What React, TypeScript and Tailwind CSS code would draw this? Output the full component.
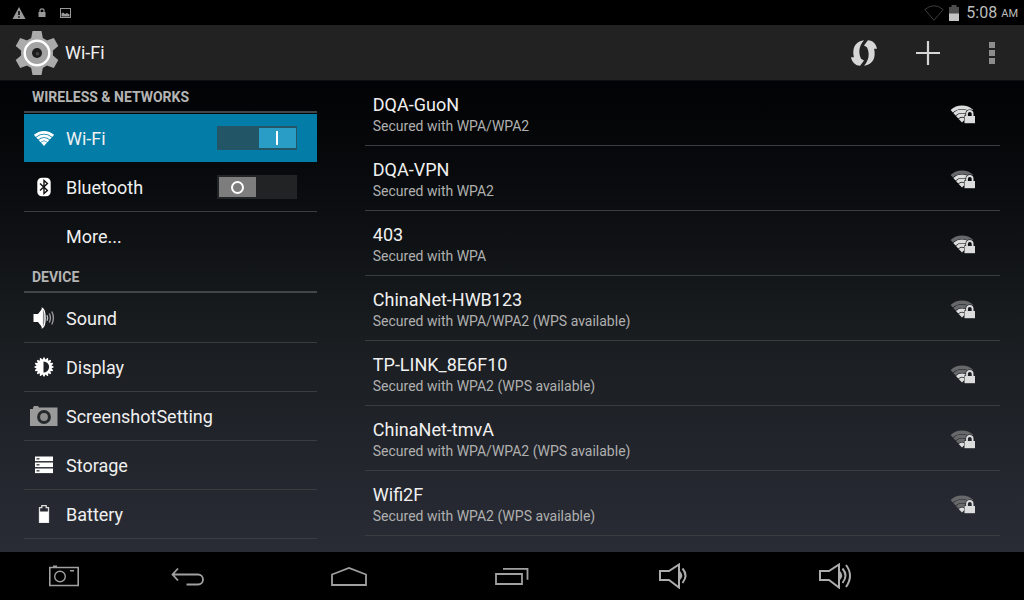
import { useId, useState } from "react";
import type { ReactNode } from "react";

// wedge between two radii, opening upwards from (cx, cy)
function fan(cx: number, cy: number, r1: number, r2: number, deg = 42) {
  const a = (deg * Math.PI) / 180;
  const s = Math.sin(a);
  const c = Math.cos(a);
  return `M${cx - r1 * s} ${cy - r1 * c}L${cx - r2 * s} ${cy - r2 * c}A${r2} ${r2} 0 0 1 ${cx + r2 * s} ${cy - r2 * c}L${cx + r1 * s} ${cy - r1 * c}A${r1} ${r1} 0 0 0 ${cx - r1 * s} ${cy - r1 * c}Z`;
}

const networks = [
  { name: "DQA-GuoN", security: "Secured with WPA/WPA2", level: 4 },
  { name: "DQA-VPN", security: "Secured with WPA2", level: 3 },
  { name: "403", security: "Secured with WPA", level: 3 },
  { name: "ChinaNet-HWB123", security: "Secured with WPA/WPA2 (WPS available)", level: 2 },
  { name: "TP-LINK_8E6F10", security: "Secured with WPA2 (WPS available)", level: 2 },
  { name: "ChinaNet-tmvA", security: "Secured with WPA/WPA2 (WPS available)", level: 1 },
  { name: "Wifi2F", security: "Secured with WPA2 (WPS available)", level: 1 },
];

const bands = [
  [0, 5],
  [5.6, 9],
  [9.7, 13],
  [13.7, 17],
];

function SignalIcon({ level }: { level: number }) {
  const id = useId();
  return (
    <svg width="26" height="20" viewBox="0 0 26 20" aria-label={`Signal ${level} of 4`}>
      <mask id={id}>
        <rect width="26" height="20" fill="#fff" />
        <path d="M14 20v-8.500h1.500V9.500q0-4 4.500-4t4.500 4v2.500h2v8z" fill="#000" />
      </mask>
      <g mask={`url(#${id})`}>
        {bands.map(([r1, r2], i) => (
          <path key={r2} d={fan(12, 18.6, r1, r2)} fill={i < level ? "#dcdcdc" : "#66686a"} />
        ))}
      </g>
      <rect x="14.5" y="12" width="10.500" height="7.200" fill="#dcdcdc" />
      <path d="M17 12.500V9.800q0-2.800 2.800-2.800t2.800 2.800V12.500" fill="none" stroke="#dcdcdc" strokeWidth="1.800" />
    </svg>
  );
}

const WifiIcon = () => (
  <svg width="20" height="18" viewBox="0 0 20 18" fill="#fff">
    <path d={fan(10, 17, 0, 4.6)} />
    <path d={fan(10, 17, 5.2, 8)} />
    <path d={fan(10, 17, 8.7, 11.5)} />
    <path d={fan(10, 17, 12.2, 15)} />
  </svg>
);

const BluetoothIcon = () => (
  <svg width="14" height="20" viewBox="0 0 14 20">
    <rect x="0.3" y="0.7" width="13.4" height="18.6" rx="4.5" fill="#fff" />
    <path d="M3 6.5l7.400 7L7 16.500v-13l3.400 3-7.400 7" fill="none" stroke="#111" strokeWidth="1.4" />
  </svg>
);

const SoundIcon = () => (
  <svg width="22" height="22" viewBox="0 0 22 22">
    <path d="M0.5 7h4.500L9.500 1.200v19.600L5 15H0.500z" fill="#fff" />
    <path d="M9.300 1.200c3.800 2 3.800 17.600 0 19.600z" fill="#888" stroke="#fff" strokeWidth="1.200" />
    <path d="M14 8.300q1.300 2.700 0 5.400" fill="none" stroke="#bbb" strokeWidth="1.400" />
    <path d="M16.300 6.500q2.200 4.500 0 9M18.800 4.500q3.200 6.500 0 13" fill="none" stroke="#999" strokeWidth="1.400" />
  </svg>
);

const DisplayIcon = () => (
  <svg width="20" height="20" viewBox="-10 -10 20 20">
    {[...Array(16)].map((_, i) => (
      <path key={i} d="M-1.5 -7L-0.6 -9.6H0.6L1.5 -7z" fill="#fff" transform={`rotate(${i * 22.5})`} />
    ))}
    <circle r="7.8" fill="#fff" />
    <path d="M-0.5 -5.6A5.6 5.6 0 0 1 -0.5 5.6Z" fill="#1d2024" />
  </svg>
);

const CameraIcon = () => (
  <svg width="28" height="20" viewBox="0 0 28 20">
    <path d="M0 3h3V1.5L4 0h4l1 1.500h18.500V20H0z" fill="#9a9a9a" />
    <circle cx="14" cy="11" r="5.4" fill="#8e8e8e" stroke="#26292c" strokeWidth="3" />
  </svg>
);

const StorageIcon = () => (
  <svg width="18" height="18" viewBox="0 0 18 18">
    {[0.5, 6.5, 12.5].map((y) => (
      <g key={y}>
        <rect y={y} width="18" height="4.6" fill="#fff" />
        <rect x="1.5" y={y + 1.6} width="3" height="1.4" fill="#444" />
      </g>
    ))}
  </svg>
);

const BatteryIcon = () => (
  <svg width="12" height="18" viewBox="0 0 12 18">
    <path d="M3.8 0.7h4.400v2h2.300v14.600h-9V2.700h2.300z" fill="none" stroke="#ddd" strokeWidth="1.3" />
    <rect x="1.5" y="6.5" width="9" height="11" fill="#fff" />
  </svg>
);

function Switch({ label, on, onChange }: { label: string; on: boolean; onChange: (v: boolean) => void }) {
  return (
    <label className={`relative mr-5 flex h-6 w-20 cursor-pointer p-0.5 ${on ? "justify-end bg-[#225566] pr-px" : "bg-[#222325]"}`}>
      <input
        type="checkbox"
        role="switch"
        aria-label={label}
        checked={on}
        onChange={(e) => onChange(e.target.checked)}
        className="absolute inset-0 cursor-pointer appearance-none"
      />
      <span className={`pointer-events-none flex w-[37px] items-center justify-center ${on ? "bg-[#2a9dc7]" : "bg-[#7d7d7d]"}`}>
        {on ? (
          <span className="h-3.5 w-0.5 bg-white" />
        ) : (
          <span className="size-[13px] rounded-full border-2 border-white" />
        )}
      </span>
    </label>
  );
}

function SectionTitle({ children }: { children: ReactNode }) {
  return (
    <h2 className="h-8 border-b-2 border-[#434648] pl-2 text-sm leading-8 font-bold text-[#b4b4b4]">
      {children}
    </h2>
  );
}

type RowProps = {
  label: string;
  icon?: ReactNode;
  selected?: boolean;
  last?: boolean;
  onSelect: () => void;
  children?: ReactNode;
};

function Row({ label, icon, selected, last, onSelect, children }: RowProps) {
  return (
    <li
      className={`flex h-[49px] items-center border-b bg-clip-padding ${last || selected ? "border-transparent" : "border-[#3a3d40]"} ${selected ? "bg-[#037ca8]" : ""}`}
    >
      <button onClick={onSelect} className="flex h-full min-w-0 flex-1 items-center gap-0.5 text-left text-lg">
        <span className="flex w-10 justify-center">{icon}</span>
        <span className="pt-0.5">{label}</span>
      </button>
      {children}
    </li>
  );
}

function StatusBar() {
  return (
    <div className="flex h-[25px] items-center justify-between bg-black pr-1.5 pl-3">
      <div className="flex items-center gap-3">
        <svg width="14" height="12" viewBox="0 0 14 12">
          <path d="M7 0l6.500 12H0.500z" fill="#999" />
          <path d="M7 4v4M7 9.200v1.500" stroke="#000" strokeWidth="1.5" />
        </svg>
        <svg width="8" height="10" viewBox="0 0 8 10">
          <rect x="0.5" y="4" width="7" height="5" fill="#999" />
          <path d="M2 4V2.500q0-1.700 2-1.700t2 1.700V4" fill="none" stroke="#999" strokeWidth="1.2" />
        </svg>
        <svg width="14" height="12" viewBox="0 0 14 12">
          <rect x="2.5" y="1.5" width="10" height="9" fill="none" stroke="#999" />
          <path d="M3.500 9.500V6.500l1.500-1 2 1.500 2-1 2.500 1.500v2z" fill="#999" />
        </svg>
      </div>
      <div className="flex items-center text-[#bdbdbd]">
        <svg width="20" height="16" viewBox="0 0 20 16" fill="none" stroke="#3c3c3c">
          <path d="M0.8 4.500Q10-3 19.200 4.500L10 15.300z" />
        </svg>
        <svg width="12" height="16" viewBox="0 0 12 16" className="ml-1">
          <path d="M1 2h2.500V0h5v2H11v14H1z" fill="#4d4d4d" />
          <rect x="1" y="8.5" width="10" height="7.5" fill="#c4c4c4" />
        </svg>
        <span className="ml-1.5 text-base">5:08</span>
        <span className="ml-1 pt-1 text-[11px]">AM</span>
      </div>
    </div>
  );
}

const wpsArrow = "M119 121C90 124 82 148 88 173L79 173C82 187 90 198 107 199L119 183L110 178C101 160 103 138 119 121Z";

function ActionBar() {
  return (
    <header className="flex h-14 items-center border-b border-[#0a0f12] bg-[#222] pl-3.5">
      <svg width="46" height="46" viewBox="-23 -23 46 46">
        <g fill="#ababab">
          {[0, 60, 120, 180, 240, 300].map((a) => (
            <path key={a} d="M-6 -14L-4.5 -22H4.5L6 -14z" transform={`rotate(${a})`} />
          ))}
          <circle r="16" />
        </g>
        <circle r="12.3" fill="#a3a3a3" stroke="#fff" strokeWidth="2.4" />
        <circle r="5" fill="#1c1c1c" />
        <circle cx="0.5" cy="0.8" r="1.8" fill="#444" />
      </svg>
      <h1 className="ml-[5px] flex-1 text-lg">Wi-Fi</h1>
      <button aria-label="WPS push button" className="flex h-full w-16 items-center justify-center">
        <svg width="26" height="26" viewBox="79 120 80 80" fill="#d6d6d6">
          <path d={wpsArrow} />
          <path transform="rotate(180 119 160)" d={wpsArrow} />
        </svg>
      </button>
      <button aria-label="Add network" className="flex h-full w-16 items-center justify-center">
        <svg width="24" height="24" viewBox="0 0 24 24" stroke="#d6d6d6" strokeWidth="2.2">
          <path d="M12 0v24M0 12h24" />
        </svg>
      </button>
      <button aria-label="More options" className="flex h-full w-16 flex-col items-center justify-center gap-0.5">
        <span className="size-1.5 bg-[#8c8c8c]" />
        <span className="size-1.5 bg-[#8c8c8c]" />
        <span className="size-1.5 bg-[#8c8c8c]" />
      </button>
    </header>
  );
}

function NavBar() {
  const button = "flex items-center justify-center";
  return (
    <nav className="grid h-12 grid-cols-[2fr_3fr_3fr_3fr_3fr_3fr_2fr] bg-black">
      <button aria-label="Screenshot" className="flex items-center justify-center pl-5">
        <svg width="30" height="22" viewBox="0 0 30 22" fill="none" stroke="#a0a0a0" strokeWidth="1.6">
          <path d="M0.8 2.500h28.400v18H0.800zM4 1.200h4M21 5.800h4" />
          <circle cx="11" cy="11.5" r="5.3" strokeWidth="1.4" />
        </svg>
      </button>
      <button aria-label="Back" className={button}>
        <svg width="36" height="20" viewBox="0 0 36 20" fill="none" stroke="#a0a0a0" strokeWidth="1.8">
          <path d="M7 2.500L1.500 8.500l5.500 6M1.500 8.500h25.500a5 5 0 0 1 0 10H15.500" />
        </svg>
      </button>
      <button aria-label="Home" className={button}>
        <svg width="38" height="20" viewBox="0 0 38 20" fill="none" stroke="#a0a0a0" strokeWidth="1.8">
          <path d="M1 19V8.500l17-6.500L35 8.500v10.500z" />
        </svg>
      </button>
      <button aria-label="Recent apps" className={button}>
        <svg width="34" height="18" viewBox="0 0 34 18" fill="none" stroke="#a0a0a0" strokeWidth="1.8">
          <path d="M1 7h26v10H1zM8 1.800h24.500v11" />
        </svg>
      </button>
      <button aria-label="Volume down" className={button}>
        <svg width="32" height="26" viewBox="0 0 32 26" fill="none" stroke="#adadad" strokeWidth="2">
          <path d="M2 8h9L21 1.500v23L11 17H2z" />
          <path d="M22 8q4.500 4.500 0 9z" fill="#adadad" stroke="none" />
          <path d="M24.500 5.500q6 7 0 14.500" />
        </svg>
      </button>
      <button aria-label="Volume up" className={button}>
        <svg width="34" height="26" viewBox="0 0 34 26" fill="none" stroke="#adadad" strokeWidth="2">
          <path d="M2 8h9L21 1.500v23L11 17H2z" />
          <path d="M22 8q4.500 4.500 0 9z" fill="#adadad" stroke="none" />
          <path d="M24.500 5.500q6 7 0 14.500M28 2q8 10.500 0 22" />
        </svg>
      </button>
    </nav>
  );
}

const device = [
  { label: "Sound", icon: <SoundIcon /> },
  { label: "Display", icon: <DisplayIcon /> },
  { label: "ScreenshotSetting", icon: <CameraIcon /> },
  { label: "Storage", icon: <StorageIcon /> },
  { label: "Battery", icon: <BatteryIcon /> },
];

export default function App() {
  const [selected, setSelected] = useState("Wi-Fi");
  const [wifi, setWifi] = useState(true);
  const [bluetooth, setBluetooth] = useState(false);

  const row = (label: string) => ({
    label,
    selected: selected === label,
    onSelect: () => setSelected(label),
  });

  return (
    <div className="flex min-h-screen flex-col bg-black font-['Roboto',sans-serif] text-[#f0f0f0]">
      <StatusBar />
      <ActionBar />

      <main className="flex flex-1 gap-12 bg-linear-to-b from-[#020304] via-[#181b1e] to-[#292c35] px-6">
        <aside className="w-[30%]">
          <SectionTitle>WIRELESS &amp; NETWORKS</SectionTitle>
          <ul className="pt-px">
            <Row {...row("Wi-Fi")} icon={<WifiIcon />}>
              <Switch label="Wi-Fi" on={wifi} onChange={setWifi} />
            </Row>
            <Row {...row("Bluetooth")} icon={<BluetoothIcon />}>
              <Switch label="Bluetooth" on={bluetooth} onChange={setBluetooth} />
            </Row>
            <Row {...row("More...")} last />
          </ul>
          <SectionTitle>DEVICE</SectionTitle>
          <ul className="pt-px">
            {device.map((d) => (
              <Row key={d.label} {...row(d.label)} icon={d.icon} />
            ))}
          </ul>
        </aside>

        <ul className="flex-1">
          {networks.map((n) => (
            <li key={n.name} className="h-[65px] border-b border-[#3a3d40]">
              <button className="flex h-full w-full items-center justify-between pt-0.5 pr-6 pl-2 text-left">
                <span>
                  <span className="block text-lg leading-6">{n.name}</span>
                  <span className="block text-sm leading-[18px] text-[#b0b0b0]">{n.security}</span>
                </span>
                <SignalIcon level={n.level} />
              </button>
            </li>
          ))}
        </ul>
      </main>

      <NavBar />
    </div>
  );
}
